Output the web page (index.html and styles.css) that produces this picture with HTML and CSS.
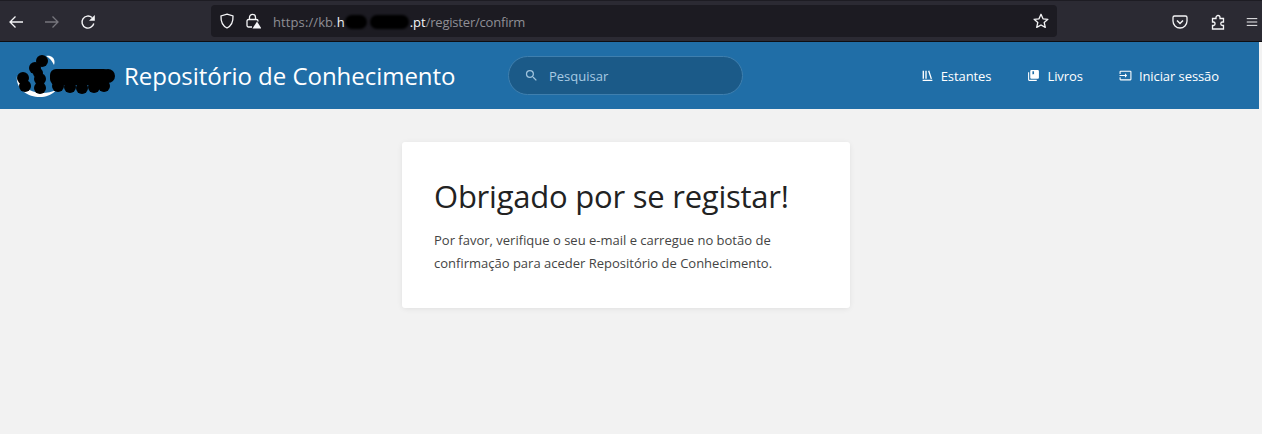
FILE: index.html
```html
<!DOCTYPE html>
<html lang="pt">
<head>
<meta charset="utf-8">
<title>Repositório de Conhecimento</title>
<link rel="stylesheet" href="styles.css">
</head>
<body>
<div class="browser">
  <div class="nav-buttons">
    <svg class="bicon" viewBox="0 0 16 16"><path d="M15 8H2M7.500 2.500 2 8l5.500 5.500" fill="none" stroke="#f5f5f7" stroke-width="1.300"/></svg>
    <svg class="bicon" viewBox="0 0 16 16"><path d="M1 8h13M8.500 2.500 14 8l-5.500 5.500" fill="none" stroke="#77767d" stroke-width="1.300"/></svg>
    <svg class="bicon" viewBox="0 0 16 16"><path d="M13.800 9.500A6 6 0 1 1 12 3.600" fill="none" stroke="#f5f5f7" stroke-width="1.400"/><path d="M14.800 1v5.800H9z" fill="#f5f5f7"/></svg>
  </div>
  <div class="urlbar">
    <svg class="shield" viewBox="0 0 16 16"><path d="M8 1.200 14 3c.300 6-1.500 9.800-6 12C3.500 12.800 1.700 9 2 3z" fill="none" stroke="#f5f5f7" stroke-width="1.300"/></svg>
    <svg class="lock" viewBox="0 0 16 16"><path d="M4.500 6.500V4.300a3 3 0 0 1 6 0v2.200M7 14H3.500A1.500 1.500 0 0 1 2 12.500V8A1.500 1.500 0 0 1 3.500 6.500h8A1.500 1.500 0 0 1 13 8v.5" fill="none" stroke="#f5f5f7" stroke-width="1.300"/><path d="M12 8.500 16.500 15.500H7.500z" fill="#f5f5f7"/></svg>
    <span class="url"><span class="url-scheme">https://kb.</span><span class="url-host">h<span class="blot-a"></span><span class="blot-b"></span>.pt</span><span class="url-dim">/register/confirm</span></span>
    <svg class="star" viewBox="0 0 16 16"><path d="m8 1.300 2 4.500 4.900.5-3.700 3.200 1.100 4.900L8 12l-4.300 2.400 1.100-4.900L1.100 6.300 6 5.800z" fill="none" stroke="#f5f5f7" stroke-width="1.300" stroke-linejoin="round"/></svg>
  </div>
  <div class="tools">
    <svg class="bicon pocket" viewBox="0 0 16 16"><path d="M2.500 2h11A1.500 1.500 0 0 1 15 3.500V7a7 7 0 0 1-14 0V3.500A1.500 1.500 0 0 1 2.500 2z" fill="none" stroke="#f5f5f7" stroke-width="1.300"/><path d="M5 6.500 8 9.500l3-3" fill="none" stroke="#f5f5f7" stroke-width="1.500"/></svg>
    <svg class="bicon" viewBox="0 0 16 16"><path d="M6 3.500a2 2 0 1 1 4 0V4.500h3.500V8h-1a1.700 1.700 0 0 0 0 3.500h1V15H2.500v-3.500h1.200a1.800 1.800 0 0 0 0-3.500H2.500V4.500H6z" fill="none" stroke="#f5f5f7" stroke-width="1.300"/></svg>
    <svg class="bicon menu" viewBox="0 0 16 16"><path d="M1 3.500h14M1 8h14M1 12.500h14" fill="none" stroke="#f5f5f7" stroke-width="1.300"/></svg>
  </div>
</div>
<header class="topbar">
  <div class="brand">
    <svg class="logo" viewBox="0 0 100 44"><path d="M1 22C-1 34 12 44 26 43 32 42.500 37 40 40 36 30 41 16 40 8 32zM30 2C36 1 40 5 38 11 36 7 34 4 30 2z" fill="#fff"/><g fill="#000"><circle cx="26" cy="7" r="6"/><circle cx="19" cy="14" r="6"/><circle cx="22" cy="19" r="5"/><circle cx="7" cy="24" r="6"/><circle cx="9" cy="32" r="6"/><circle cx="24" cy="25" r="6"/><circle cx="24" cy="34" r="6"/><rect x="34" y="15" width="60" height="16" rx="6"/><circle cx="42" cy="32" r="6"/><circle cx="54" cy="33" r="6"/><circle cx="66" cy="34" r="6"/><circle cx="78" cy="33" r="6"/><circle cx="88" cy="32" r="6"/><circle cx="92" cy="22" r="7"/></g></svg>
    <span class="brand-name">Repositório de Conhecimento</span>
  </div>
  <div class="search">
    <svg class="search-icon" viewBox="0 0 24 24"><path d="M15.500 14h-.79l-.28-.27A6.471 6.471 0 0 0 16 9.500 6.500 6.500 0 1 0 9.500 16c1.610 0 3.090-.59 4.230-1.570l.27.28v.79l5 4.990L20.490 19l-4.990-5zm-6 0C7.010 14 5 11.990 5 9.500S7.010 5 9.500 5 14 7.010 14 9.500 11.990 14 9.500 14z" fill="#9fc3dd"/></svg>
    <span class="search-text">Pesquisar</span>
  </div>
  <nav class="links">
    <a class="link"><svg class="link-icon" viewBox="0 0 24 24"><path d="M3 3h2.500v15H3zM8 3h2.500v15H8zM13 3.500l2.300-.7 5 15-2.300.7zM3 20h18v2H3z" fill="#fff"/></svg>Estantes</a>
    <a class="link"><svg class="link-icon" viewBox="0 0 24 24"><path d="M4 6H2v14a2 2 0 0 0 2 2h14v-2H4z" fill="#fff"/><path fill-rule="evenodd" d="M20 2H8a2 2 0 0 0-2 2v12a2 2 0 0 0 2 2h12a2 2 0 0 0 2-2V4a2 2 0 0 0-2-2zM10 4h3v6l-1.500-1L10 10z" fill="#fff"/></svg>Livros</a>
    <a class="link"><svg class="link-icon" viewBox="0 0 24 24"><path d="M21 3H3a2 2 0 0 0-2 2v4h2V5h18v14H3v-4H1v4a2 2 0 0 0 2 2h18a2 2 0 0 0 2-2V5a2 2 0 0 0-2-2zM11 16l4-4-4-4v3H1v2h10z" fill="#fff"/></svg>Iniciar sessão</a>
  </nav>
</header>
<main class="page">
  <section class="card">
    <h1 class="card-title">Obrigado por se registar!</h1>
    <p class="card-text">Por favor, verifique o seu e-mail e carregue no botão de confirmação para aceder Repositório de Conhecimento.</p>
  </section>
</main>
</body>
</html>
```
FILE: styles.css
```css
* { box-sizing: border-box; }
html, body { margin: 0; height: 100%; }
body {
  background: #f2f2f2;
  font-family: "Open Sans", "Noto Sans", sans-serif;
  overflow: hidden;
}
.browser {
  height: 42px;
  background: #2b2a33;
  border-top: 1px solid #1d1c23;
  border-bottom: 1px solid #0e0e12;
  display: flex;
  align-items: center;
}
.bicon { width: 16px; height: 16px; display: block; }
.nav-buttons {
  width: 211px;
  padding: 1px 0 0 8px;
  display: flex;
  gap: 20px;
}
.urlbar {
  width: 846px;
  height: 32px;
  background: #1c1b22;
  border-radius: 4px;
  display: flex;
  align-items: center;
  padding: 0 8px;
}
.shield { width: 16px; height: 16px; margin-right: 10px; }
.lock { width: 16px; height: 16px; margin-right: 12px; }
.url { font-size: 13px; flex: 1; display: flex; align-items: center; white-space: nowrap; padding-top: 1px; }
.url-scheme { color: #8f8f95; letter-spacing: .1px; }
.url-dim { color: #8f8f95; letter-spacing: -.2px; }
.url-host { color: #f5f5f7; display: flex; align-items: center; }
.blot-a { width: 22px; height: 14px; background: #000; border-radius: 7px; margin: 0 3px 0 0; filter: blur(1px); }
.blot-b { width: 39px; height: 14px; background: #000; border-radius: 7px; margin-right: 1px; filter: blur(1px); }
.star { width: 16px; height: 16px; }
.tools {
  flex: 1;
  display: flex;
  justify-content: flex-end;
  gap: 20px;
  padding-top: 1px;
}
.pocket { margin-right: 2px; }
.menu { width: 12px; margin-right: 4px; }
.topbar {
  height: 67px;
  margin-right: 3px;
  background: #206ea7;
  display: flex;
  align-items: center;
  padding: 0 40px 0 16px;
}
.brand { display: flex; align-items: center; width: 492px; }
.logo { width: 100px; height: 44px; margin-right: 8px; flex: none; }
.brand-name { color: #fff; font-size: 24px; white-space: nowrap; letter-spacing: -.03px; }
.search {
  width: 235px;
  height: 39px;
  border-radius: 20px;
  background: #1b5a88;
  border: 1px solid #3f7fae;
  display: flex;
  align-items: center;
  padding-left: 15px;
}
.search-icon { width: 15px; height: 15px; margin-right: 10px; }
.search-text { color: #a9cbe3; font-size: 13px; }
.links { margin-left: auto; display: flex; gap: 36px; }
.link { color: #fff; font-size: 13px; letter-spacing: -.08px; display: flex; align-items: center; }
.link-icon { width: 13px; height: 13px; margin-right: 7px; }
.page { display: flex; justify-content: center; padding: 33px 10px 0 0; }
.card {
  width: 448px;
  height: 166px;
  background: #fff;
  border-radius: 3px;
  box-shadow: 0 1px 6px -1px rgba(0, 0, 0, .1);
  padding: 32px;
}
.card-title {
  margin: 0 0 11px;
  font-size: 31px;
  font-weight: 400;
  line-height: 44px;
  letter-spacing: -.23px;
  color: #222;
  white-space: nowrap;
}
.card-text { margin: 0; font-size: 13px; line-height: 23px; color: #444; }
```
